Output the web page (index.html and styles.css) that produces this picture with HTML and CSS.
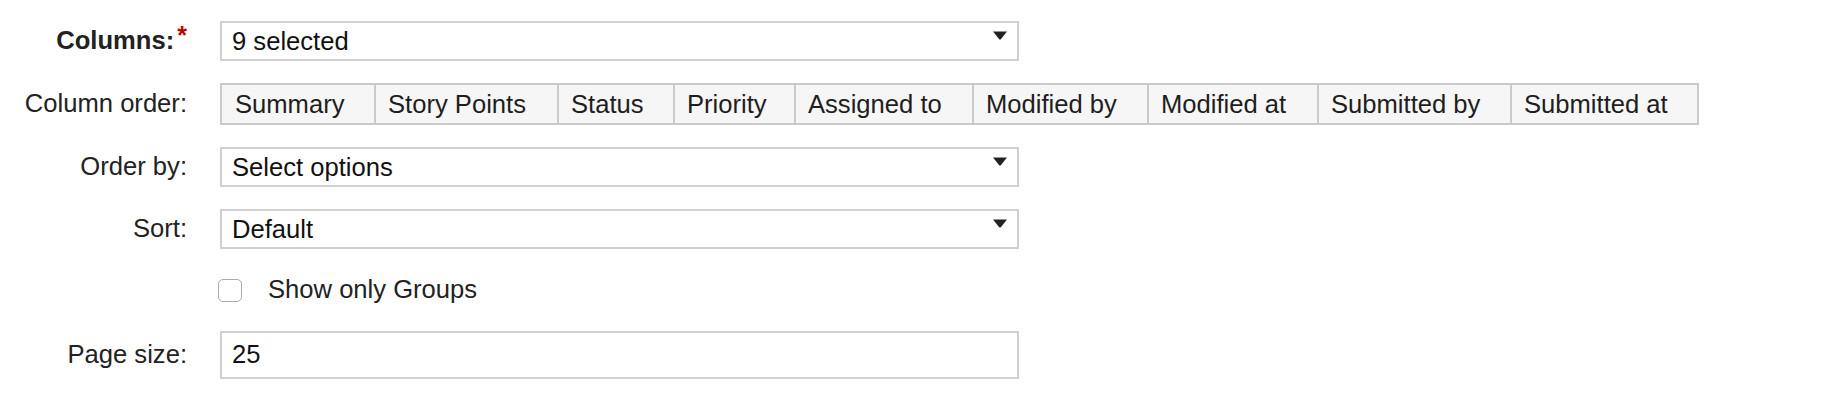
FILE: index.html
```html
<!DOCTYPE html>
<html>
<head>
<meta charset="utf-8">
<link rel="stylesheet" href="styles.css">
</head>
<body>
<form class="form">
  <div class="row">
    <div class="label label-bold">Columns:<span class="req">*</span></div>
    <div class="select">
      <span class="value">9 selected</span>
      <svg class="caret" width="14" height="9" viewBox="0 0 14 9"><path d="M0 0.5 H14 L7.6 8.5 H6.4 Z" fill="#222"/></svg>
    </div>
  </div>
  <div class="row">
    <div class="label">Column order:</div>
    <div class="order">
      <div class="cell">Summary</div>
      <div class="cell">Story Points</div>
      <div class="cell">Status</div>
      <div class="cell">Priority</div>
      <div class="cell">Assigned to</div>
      <div class="cell">Modified by</div>
      <div class="cell">Modified at</div>
      <div class="cell">Submitted by</div>
      <div class="cell">Submitted at</div>
    </div>
  </div>
  <div class="row">
    <div class="label">Order by:</div>
    <div class="select">
      <span class="value">Select options</span>
      <svg class="caret" width="14" height="9" viewBox="0 0 14 9"><path d="M0 0.5 H14 L7.6 8.5 H6.4 Z" fill="#222"/></svg>
    </div>
  </div>
  <div class="row">
    <div class="label">Sort:</div>
    <div class="select">
      <span class="value">Default</span>
      <svg class="caret" width="14" height="9" viewBox="0 0 14 9"><path d="M0 0.5 H14 L7.6 8.5 H6.4 Z" fill="#222"/></svg>
    </div>
  </div>
  <div class="row row-check">
    <div class="label"></div>
    <label class="check"><span class="box"></span><span class="check-text">Show only Groups</span></label>
  </div>
  <div class="row">
    <div class="label">Page size:</div>
    <div class="input"><span class="value">25</span></div>
  </div>
</form>
</body>
</html>
```
FILE: styles.css
```css
html, body {
  margin: 0;
  padding: 0;
  background: #ffffff;
}
body {
  font-family: "Liberation Sans", Arial, Helvetica, sans-serif;
  font-size: 25.6px;
  color: #222;
}
.form {
  display: flex;
  flex-direction: column;
  gap: 22px;
  padding-top: 21px;
}
.row {
  display: flex;
  align-items: center;
}
.label {
  width: 187px;
  flex: none;
  text-align: right;
  margin-right: 33px;
  color: #222;
  line-height: 1;
}
.label-bold {
  font-weight: bold;
}
.req {
  color: #c00000;
  font-size: 25px;
  font-weight: bold;
  line-height: 0;
  vertical-align: 5px;
  margin-left: 3px;
}
.select {
  box-sizing: border-box;
  width: 799px;
  height: 40px;
  border: 2px solid #d0d0d0;
  background: #fff;
  display: flex;
  justify-content: space-between;
  align-items: flex-start;
  padding: 0 10px 0 10px;
}
.value {
  color: #111;
  line-height: 36px;
}
.caret {
  margin-top: 8px;
  display: block;
}
.order {
  box-sizing: border-box;
  height: 42px;
  border: 2px solid #cacaca;
  background: #f6f6f6;
  display: grid;
  grid-template-columns: 152px 183px 116px 121px 178px 175px 170px 193px 187px;
}
.cell {
  box-sizing: border-box;
  border-left: 2px solid #cacaca;
  padding-left: 12px;
  line-height: 38px;
  color: #1e1e1e;
  white-space: nowrap;
}
.cell:first-child {
  border-left: none;
  padding-left: 13px;
}
.row-check {
  height: 38px;
}
.check {
  display: flex;
  align-items: center;
  margin-left: -2px;
}
.box {
  box-sizing: border-box;
  width: 24px;
  height: 23px;
  border: 1.5px solid #aaaaaa;
  border-radius: 5px;
  background: #fff;
  margin-right: 26px;
}
.check-text {
  color: #222;
  line-height: 1;
}
.input {
  box-sizing: border-box;
  width: 799px;
  height: 48px;
  border: 2px solid #d0d0d0;
  background: #fff;
  padding: 0 10px;
  display: flex;
  align-items: center;
}
.input .value {
  line-height: 1;
}
```
